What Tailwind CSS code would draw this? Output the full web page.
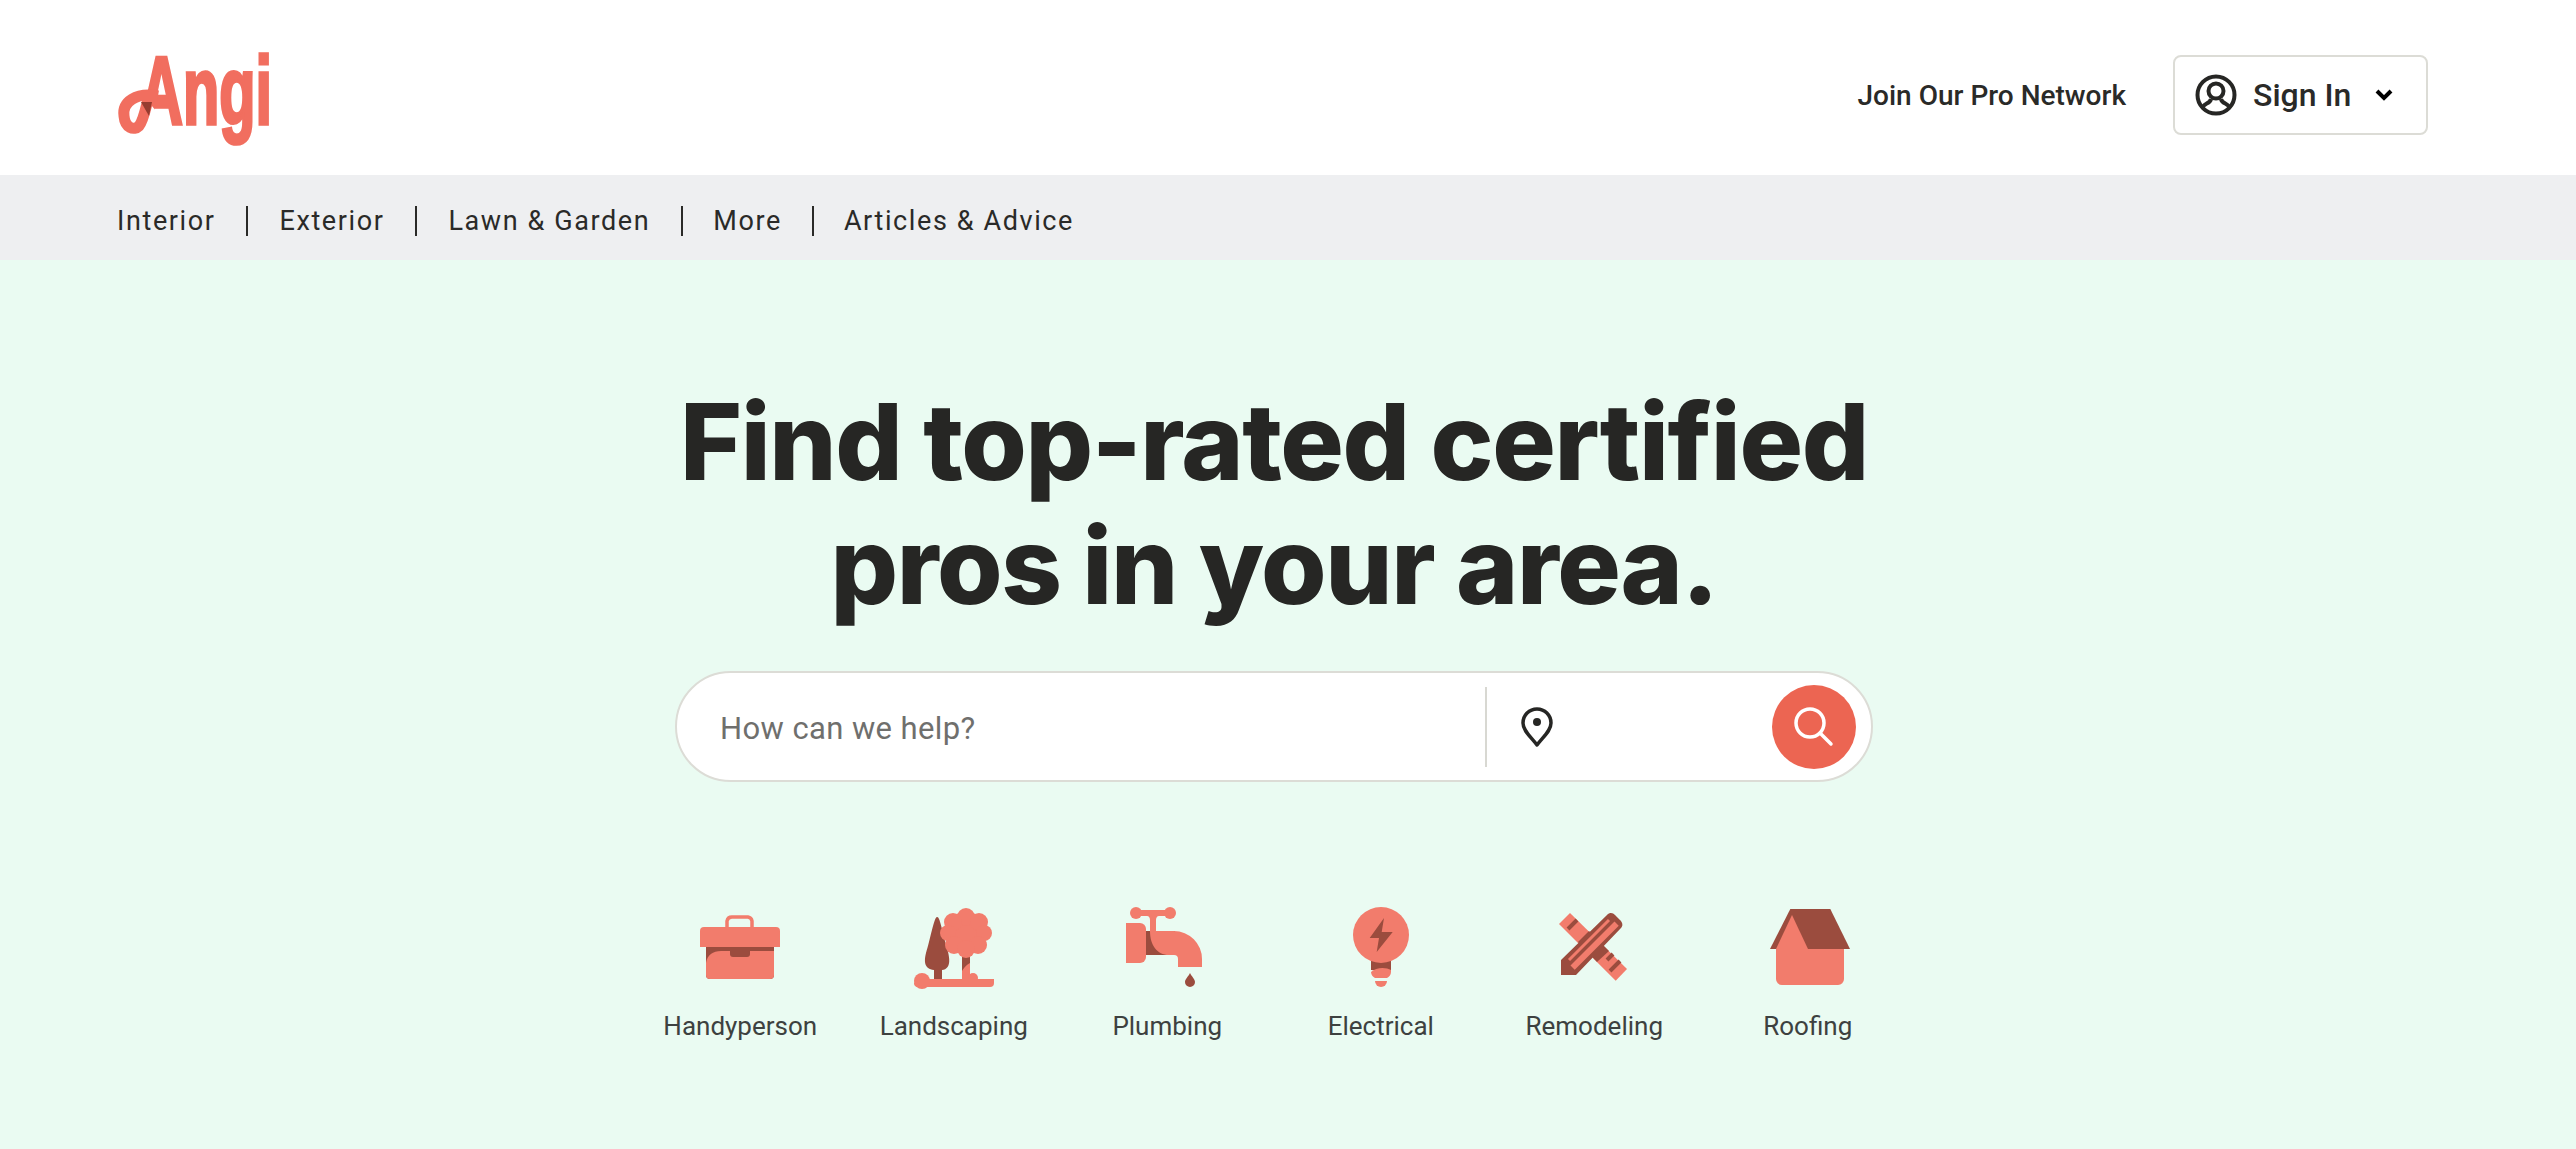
<!DOCTYPE html>
<html lang="en">
<head>
    <meta charset="UTF-8">
    <title>Angi</title>
    <script src="https://cdn.jsdelivr.net/npm/@tailwindcss/browser@4"></script>
</head>
<body class="bg-[#eafbf2] font-['Roboto',sans-serif] text-[#2a2a28] h-[1149px] overflow-hidden">
    <!-- Header -->
    <header class="bg-white h-[175px] flex items-center justify-between pl-[110px] pr-[148px] pt-[15px]">
        <svg class="w-[170px] h-[120px]" viewBox="110 35 170 120">
            <text transform="translate(140 124) scale(0.6125 1)" font-family="Liberation Sans" font-weight="700" font-size="97" fill="#f16e5f" stroke="#f16e5f" stroke-width="3" vector-effect="non-scaling-stroke">Angi</text>
            <path d="M150 104C156 110 160 118 163 127H128V104Z" fill="#fff"/>
            <path d="M158 96C136 92 122 102 124 116C125 128 134 131 139 126C144 120 146 106 150 92" fill="none" stroke="#f16e5f" stroke-width="11"/>
            <path d="M141 102L152 102L149 116Z" fill="#963c30"/>
        </svg>
        <div class="flex items-center gap-[47px]">
            <a class="text-[28px] font-medium pt-[2px]">Join Our Pro Network</a>
            <button class="w-[255px] h-[80px] border-2 border-[#dcdcd6] rounded-[8px] flex items-center pl-[20px] text-[32px] font-medium">
                <svg class="w-[42px] h-[42px] mr-[16px]" viewBox="0 0 42 42" fill="none" stroke="#262624" stroke-width="4">
                    <circle cx="21" cy="21" r="18.500"/>
                    <circle cx="21" cy="17" r="7.500"/>
                    <path d="M7 34C9 29 15 30 16 25M35 34C33 29 27 30 26 25"/>
                </svg>
                Sign In
                <svg class="w-[18px] h-[12px] ml-[24px]" viewBox="0 0 18 12" fill="none" stroke="#000" stroke-width="4"><path d="M2 2L9 9L16 2"/></svg>
            </button>
        </div>
    </header>

    <!-- Category nav -->
    <nav class="bg-[#eeeff1] h-[85px] flex items-center pl-[117px] pt-[7px] text-[27px] tracking-[1.6px]">
        <a class="pr-[31px] border-r-2 border-[#2a2a28] h-[30px] flex items-center">Interior</a>
        <a class="px-[31px] border-r-2 border-[#2a2a28] h-[30px] flex items-center">Exterior</a>
        <a class="px-[31px] border-r-2 border-[#2a2a28] h-[30px] flex items-center">Lawn &amp; Garden</a>
        <a class="px-[30px] border-r-2 border-[#2a2a28] h-[30px] flex items-center">More</a>
        <a class="pl-[30px] h-[30px] flex items-center">Articles &amp; Advice</a>
    </nav>

    <!-- Hero -->
    <main class="flex flex-col items-center pr-[28px]">
        <h1 class="mt-[120px] text-center text-[106px] tracking-[-1.4px] leading-[124px] font-extrabold text-[#262624] font-['Inter',sans-serif]">Find top-rated certified<br>pros in your area.</h1>

        <div class="mt-[43px] w-[1198px] h-[111px] bg-white border-2 border-[#dcdcd6] rounded-full flex items-center pl-[43px] pr-[15px]">
            <span class="text-[31px] text-[#6f6f6d] w-[765px] tracking-[0.4px] pt-[5px]">How can we help?</span>
            <div class="w-[2px] h-[80px] bg-[#d8d8d2]"></div>
            <svg class="ml-[34px] w-[32px] h-[40px]" viewBox="0 0 32 40" fill="none" stroke="#262624" stroke-width="3.500">
                <path d="M16 38C10 30 2 24 2 16A14 14 0 0 1 30 16C30 24 22 30 16 38Z" stroke-linejoin="round"/>
                <circle cx="16" cy="15" r="4" fill="#262624" stroke="none"/>
            </svg>
            <button class="ml-auto w-[84px] h-[84px] rounded-full bg-[#ec6552] flex items-center justify-center">
                <svg class="w-[40px] h-[40px]" viewBox="0 0 40 40" fill="none" stroke="#fff" stroke-width="3.500" stroke-linecap="round">
                    <circle cx="16" cy="16" r="14"/>
                    <path d="M26 26L37 37"/>
                </svg>
            </button>
        </div>

        <div class="mt-[122px] flex">
            <div class="w-[213.5px] flex flex-col items-center">
                <svg class="w-[100px] h-[85px]" viewBox="41 25 100 85">
                    <path d="M78 48V42A5 5 0 0 1 83 38H99A5 5 0 0 1 103 42V48" fill="none" stroke="#f27c6c" stroke-width="3.500"/>
                    <path d="M57 68H125V96A4 4 0 0 1 121 100H61A4 4 0 0 1 57 96Z" fill="#9b4c3e"/>
                    <path d="M57 84C58 76 64 72 72 72H125V96A4 4 0 0 1 121 100H61A4 4 0 0 1 57 96Z" fill="#f27c6c"/>
                    <path d="M81 68H101V75A3 3 0 0 1 98 78H84A3 3 0 0 1 81 75Z" fill="#9b4c3e"/>
                    <path d="M51 52A4 4 0 0 1 55 48H127A4 4 0 0 1 131 52V68H51Z" fill="#f27c6c"/>
                </svg>
                <span class="mt-[18px] text-[26px] text-[#3d4140]">Handyperson</span>
            </div>
            <div class="w-[213.5px] flex flex-col items-center">
                <svg class="w-[100px] h-[85px]" viewBox="254 25 100 85">
                    <path d="M287 38C289 38 290 41 296 66C300 78 302 90 292 91V100H284V91C274 90 274 82 276 74C280 62 284 38 287 38Z" fill="#9b4c3e"/>
                    <rect x="312" y="75" width="8" height="26" fill="#f27c6c"/>
                    <path d="M312 78H320V84C316 86 313 90 312 92Z" fill="#9b4c3e"/>
                    <circle cx="316" cy="54" r="21" fill="#f27c6c"/>
                    <circle cx="316" cy="38" r="9" fill="#f27c6c"/>
                    <circle cx="303" cy="43" r="9" fill="#f27c6c"/>
                    <circle cx="329" cy="43" r="9" fill="#f27c6c"/>
                    <circle cx="298" cy="54" r="8" fill="#f27c6c"/>
                    <circle cx="334" cy="54" r="8" fill="#f27c6c"/>
                    <circle cx="304" cy="66" r="9" fill="#f27c6c"/>
                    <circle cx="328" cy="66" r="9" fill="#f27c6c"/>
                    <circle cx="316" cy="70" r="9" fill="#f27c6c"/>
                    <circle cx="272" cy="102" r="8" fill="#f27c6c"/>
                    <circle cx="323" cy="99" r="5" fill="#f27c6c"/>
                    <path d="M268 100H344V104A4 4 0 0 1 340 108H268A4 4 0 0 1 264 104Z" fill="#f27c6c"/>
                </svg>
                <span class="mt-[18px] text-[26px] text-[#3d4140]">Landscaping</span>
            </div>
            <div class="w-[213.5px] flex flex-col items-center">
                <svg class="w-[100px] h-[85px]" viewBox="38 25 100 85">
                    <rect x="66" y="52" width="30" height="24" fill="#9b4c3e"/>
                    <path d="M47 44H61A6 6 0 0 1 67 50V78A6 6 0 0 1 61 84H47Z" fill="#f27c6c"/>
                    <circle cx="57" cy="34" r="6" fill="#f27c6c"/>
                    <circle cx="91" cy="34" r="6" fill="#f27c6c"/>
                    <path d="M57 31H91V37H80C78 37 77 39 77 41V52H95A28 28 0 0 1 123 80V88H99V80A4 4 0 0 0 95 76H90C78 76 71 66 71 52V41C71 39 70 37 68 37H57Z" fill="#f27c6c"/>
                    <path d="M111 94C113 98 116 100 116 103A5 5 0 0 1 106 103C106 100 109 98 111 94Z" fill="#9b4c3e"/>
                </svg>
                <span class="mt-[18px] text-[26px] text-[#3d4140]">Plumbing</span>
            </div>
            <div class="w-[213.5px] flex flex-col items-center">
                <svg class="w-[100px] h-[85px]" viewBox="251 25 100 85">
                    <rect x="291" y="80" width="20" height="11" fill="#9b4c3e"/>
                    <path d="M291 93C296 88 306 88 311 91V93C311 96 309 98 307 99H295C293 98 291 96 291 93Z" fill="#f27c6c"/>
                    <circle cx="301" cy="56" r="28" fill="#f27c6c"/>
                    <path d="M304 39L289.700 59H299L296.700 73L312.700 53H301.700Z" fill="#9b4c3e"/>
                    <path d="M295 102H307A6 6 0 0 1 295 102Z" fill="#f27c6c"/>
                </svg>
                <span class="mt-[18px] text-[26px] text-[#3d4140]">Electrical</span>
            </div>
            <div class="w-[213.5px] flex flex-col items-center">
                <svg class="w-[100px] h-[85px]" viewBox="45 25 100 85">
                    <path d="M60 45L71 34L128 90L116.700 101.700Z" fill="#f27c6c"/>
                    <path d="M69 50L78 41M108 81L114 75M111 92L121 82" stroke="#9b4c3e" stroke-width="4" fill="none"/>
                    <path d="M79 63L90 52L110 72L98 83Z" fill="#9b4c3e"/>
                    <path d="M62 81L108 36C111 33 114 34 116 36L121 41C124 44 124 47 122 49L77 96H62Z" fill="#9b4c3e"/>
                    <path d="M70 81L110 41" stroke="#f27c6c" stroke-width="3" fill="none"/>
                    <path d="M73.600 88.600L117.600 44.600" stroke="#f27c6c" stroke-width="6" fill="none"/>
                    <path d="M62 81L77 96H62Z" fill="#9b4c3e"/>
                </svg>
                <span class="mt-[18px] text-[26px] text-[#3d4140]">Remodeling</span>
            </div>
            <div class="w-[213.5px] flex flex-col items-center">
                <svg class="w-[100px] h-[85px]" viewBox="257 25 100 85">
                    <path d="M275 70H343V100A6 6 0 0 1 337 106H281A6 6 0 0 1 275 100Z" fill="#f27c6c"/>
                    <path d="M289.300 30H329.300L349 70H269Z" fill="#9b4c3e"/>
                    <path d="M291 36L307 70H275Z" fill="#f27c6c"/>
                </svg>
                <span class="mt-[18px] text-[26px] text-[#3d4140]">Roofing</span>
            </div>
        </div>
    </main>
</body>
</html>
